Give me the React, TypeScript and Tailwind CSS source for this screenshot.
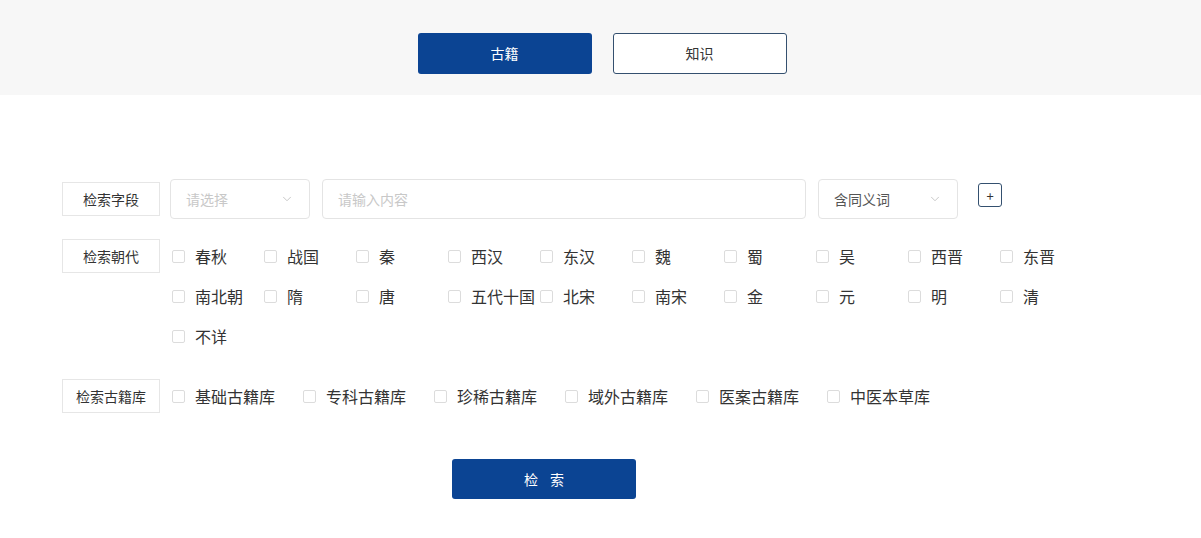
import { ChevronDown } from "lucide-react";

const dynasties = [
  "春秋", "战国", "秦", "西汉", "东汉", "魏", "蜀", "吴", "西晋", "东晋",
  "南北朝", "隋", "唐", "五代十国", "北宋", "南宋", "金", "元", "明", "清",
  "不详",
];

const libraries = ["基础古籍库", "专科古籍库", "珍稀古籍库", "域外古籍库", "医案古籍库", "中医本草库"];

const Label = ({ text }: { text: string }) => (
  <div className="w-[98px] h-[34px] shrink-0 border border-[#e6e6e6] flex items-center justify-center text-[14px] text-[#333]">
    {text}
  </div>
);

const Check = ({ text, w }: { text: string; w: string }) => (
  <label className={`flex items-center h-[40px] ${w}`}>
    <span className="w-[13px] h-[13px] border border-[#dcdcdc] rounded-[2px] bg-white mr-[10px]" />
    <span className="text-[16px] text-[#333] whitespace-nowrap">{text}</span>
  </label>
);

export default function App() {
  return (
    <div className="w-[1201px] h-[538px] bg-white overflow-hidden" style={{ fontFamily: '"Noto Sans CJK SC", "Noto Sans", sans-serif' }}>
      {/* 顶部切换 */}
      <div className="h-[95px] bg-[#f7f7f7] flex justify-center items-start pt-[33px] gap-[21px] pl-[3px]">
        <button className="w-[174px] h-[41px] rounded-[3px] bg-[#0b4493] text-white text-[14px]">古籍</button>
        <button className="w-[174px] h-[41px] rounded-[3px] border border-[#34506f] bg-white text-[#333] text-[14px]">知识</button>
      </div>

      <div className="pl-[62px] pt-[84px]">
        {/* 检索字段 */}
        <div className="flex items-center h-[40px]">
          <Label text="检索字段" />
          <div className="ml-[10px] w-[140px] h-[40px] border border-[#e4e4e4] rounded-[4px] flex items-center justify-between px-[15px] text-[14px] text-[#c8c8c8]">
            <span>请选择</span>
            <ChevronDown size={14} strokeWidth={1.5} className="text-[#c0c0c0]" />
          </div>
          <div className="ml-[12px] w-[484px] h-[40px] border border-[#e4e4e4] rounded-[4px] flex items-center px-[15px] text-[14px] text-[#c8c8c8]">
            请输入内容
          </div>
          <div className="ml-[12px] w-[140px] h-[40px] border border-[#e4e4e4] rounded-[4px] flex items-center justify-between px-[15px] text-[14px] text-[#555]">
            <span>含同义词</span>
            <ChevronDown size={14} strokeWidth={1.5} className="text-[#c0c0c0]" />
          </div>
          <button className="ml-[20px] mb-[8px] w-[24px] h-[24px] border border-[#34506f] rounded-[3px] flex items-center justify-center text-[13px] text-[#333] leading-none">
            +
          </button>
        </div>

        {/* 检索朝代 */}
        <div className="flex items-start mt-[20px]">
          <Label text="检索朝代" />
          <div className="ml-[12px] -mt-[3px] grid grid-cols-[repeat(10,92px)]">
            {dynasties.map((d) => (
              <Check key={d} text={d} w="w-[92px]" />
            ))}
          </div>
        </div>

        {/* 检索古籍库 */}
        <div className="flex items-center mt-[20px] h-[40px]">
          <Label text="检索古籍库" />
          <div className="ml-[12px] flex">
            {libraries.map((l) => (
              <Check key={l} text={l} w="w-[131px]" />
            ))}
          </div>
        </div>

        <div className="flex pl-[390px] mt-[43px]">
          <button className="w-[184px] h-[40px] rounded-[3px] bg-[#0b4493] text-white text-[14px] tracking-[12px] pl-[12px]">
            检索
          </button>
        </div>
      </div>
    </div>
  );
}
